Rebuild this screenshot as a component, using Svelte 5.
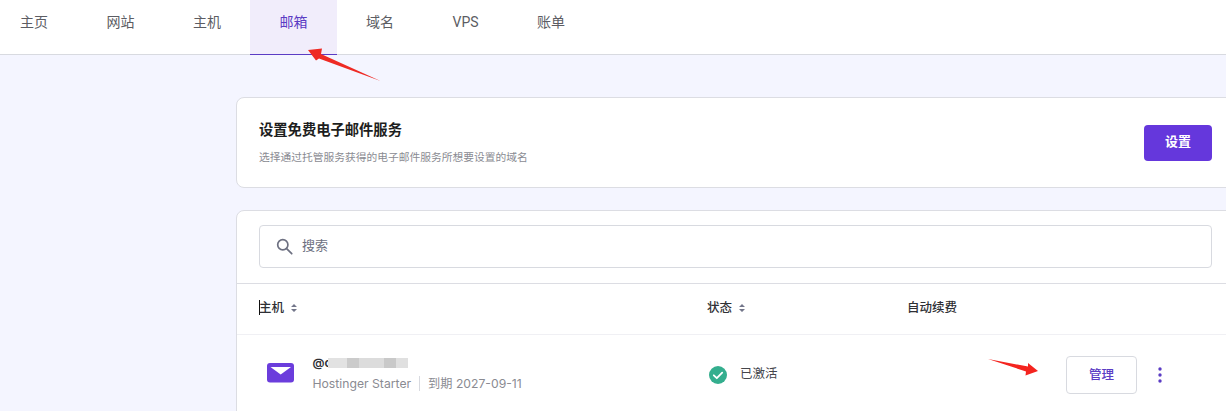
<script>
  const tabs = ['主页', '网站', '主机', '邮箱', '域名', 'VPS', '账单'];
  // pixelated redaction over the address
  const blurCells = [
    { w: 19, c: '#e2e2e2' },
    { w: 12, c: '#cbcbcb' },
    { w: 25, c: '#dcdcdc' },
    { w: 12, c: '#c9c9c9' },
    { w: 12, c: '#e0e0e0' }
  ];
</script>

<div class="page">
  <nav class="tabs">
    {#each tabs as tab}
      <a class="tab" class:active={tab === '邮箱'} href="#top">{tab}</a>
    {/each}
  </nav>

  <main class="content">
    <section class="card setup">
      <div>
        <h2>设置免费电子邮件服务</h2>
        <p>选择通过托管服务获得的电子邮件服务所想要设置的域名</p>
      </div>
      <button class="primary">设置</button>
    </section>

    <section class="card list">
      <div class="search-wrap">
        <div class="search">
          <svg width="17" height="17" viewBox="0 0 20 20" fill="none" stroke="#6d7081" stroke-width="2">
            <circle cx="8" cy="8" r="6" />
            <path d="M12.500 12.500l6 6" stroke-linecap="round" />
          </svg>
          <span>搜索</span>
        </div>
      </div>

      <div class="grid head">
        <div class="host-head">
          <i class="caret"></i>主机
          <svg class="sort" width="8" height="10" viewBox="0 0 8 10" fill="#73768a"><path d="M4 1l3 3H1zM4 9L1 6h6z" /></svg>
        </div>
        <div>状态 <svg class="sort" width="8" height="10" viewBox="0 0 8 10" fill="#73768a"><path d="M4 1l3 3H1zM4 9L1 6h6z" /></svg></div>
        <div>自动续费</div>
        <div></div>
      </div>

      <div class="grid row">
        <div class="host">
          <svg class="mail" width="27" height="20" viewBox="0 0 27 20">
            <rect width="27" height="19.500" rx="3" fill="#6b3ddc" />
            <path d="M3.500 4h20.500l-10.300 7.500z" fill="#fff" />
          </svg>
          <div class="host-text">
            <div class="domain">@c<span class="blur">{#each blurCells as cell}<b style="width: {cell.w}px; background: {cell.c}"></b>{/each}</span></div>
            <div class="meta"><span>Hostinger Starter</span><i></i><span>到期 2027-09-11</span></div>
          </div>
        </div>
        <div class="status">
          <svg width="18" height="18" viewBox="0 0 18 18">
            <circle cx="9" cy="9" r="9" fill="#34ae8e" />
            <path d="M4.800 9.300l3 2.900 5.400-5.600" fill="none" stroke="#fff" stroke-width="1.800" stroke-linecap="round" stroke-linejoin="round" />
          </svg>
          <span>已激活</span>
        </div>
        <div></div>
        <div class="actions">
          <button class="outline">管理</button>
          <svg width="4" height="16" viewBox="0 0 4 16" fill="#5b3cc4">
            <circle cx="2" cy="2" r="1.700" /><circle cx="2" cy="8" r="1.700" /><circle cx="2" cy="14" r="1.700" />
          </svg>
        </div>
      </div>
    </section>
  </main>

  <!-- red annotation arrows drawn over the screenshot -->
  <svg class="arrows" width="1226" height="411" viewBox="0 0 1226 411">
    <path d="M380.500 81L321 54 322 48.500 308 50 316 60.500 319 58.500z" fill="#ee2a24" />
    <path d="M988 359L1028 366.500 1028 363 1038 371 1025.500 375.500 1026 371.500z" fill="#f4241f" />
  </svg>
</div>

<style>
  :global(body) {
    margin: 0;
    overflow: hidden;
  }
  .page {
    position: relative;
    width: 1226px;
    height: 411px;
    overflow: hidden;
    background: #f4f5ff;
    color: #1d1e20;
    font-family: Inter, "Noto Sans CJK SC", sans-serif;
  }
  .tabs {
    display: flex;
    height: 54px;
    background: #fff;
    border-bottom: 1px solid #d8dae0;
  }
  .tab {
    flex: none;
    height: 42px;
    padding: 12px 29.250px 0;
    text-align: center;
    text-decoration: none;
    font-family: Roboto, "Noto Sans CJK SC", sans-serif;
    font-size: 14px;
    line-height: 20px;
    color: #5c5d63;
  }
  .tab:first-child {
    padding-left: 20px;
  }
  .tab.active {
    background: #f1edfb;
    color: #5b3cc4;
    border-bottom: 1px solid #5b3cc4;
  }
  .content {
    box-sizing: border-box;
    width: 1000px;
    margin-left: 236px;
    padding-top: 42px;
    display: flex;
    flex-direction: column;
    gap: 22px;
  }
  .card {
    background: #fff;
    border: 1px solid #dcdde3;
    border-radius: 8px;
  }
  .setup {
    height: 91px;
    box-sizing: border-box;
    display: flex;
    align-items: center;
    justify-content: space-between;
    padding: 0 23px 0 22px;
  }
  h2 {
    margin: 0 0 10px;
    font-size: 14.300px;
    line-height: 20px;
    font-weight: 700;
    color: #1d1e20;
  }
  .setup p {
    margin: 0;
    font-size: 10.760px;
    line-height: 16px;
    color: #8a8b92;
  }
  button {
    font-family: inherit;
    cursor: pointer;
  }
  .primary {
    width: 68px;
    height: 36px;
    padding: 0 0 4px;
    border: 0;
    border-radius: 4px;
    background: #6537dc;
    color: #fff;
    font-size: 13px;
    font-weight: 700;
  }
  .search-wrap {
    padding: 14px 23px 15px 22px;
    border-bottom: 1px solid #dcdde3;
  }
  .search {
    height: 41px;
    display: flex;
    align-items: center;
    gap: 9px;
    padding-left: 16px;
    border: 1px solid #d8dae0;
    border-radius: 4px;
    font-size: 13px;
    line-height: 16px;
    color: #6d7081;
  }
  .search span {
    margin-bottom: 3px;
  }
  .grid {
    display: grid;
    grid-template-columns: 448px 200px 159px 1fr;
    padding-left: 22px;
  }
  .head {
    box-sizing: border-box;
    height: 51px;
    padding-bottom: 6px;
    align-items: center;
    font-size: 12.500px;
    font-weight: 500;
    color: #2f3035;
    border-bottom: 1px solid #f0f0f4;
  }
  .host-head {
    position: relative;
  }
  .caret {
    position: absolute;
    left: 0;
    top: 3px;
    width: 1px;
    height: 15px;
    background: #111;
  }
  .sort {
    margin-left: 3px;
    vertical-align: -1px;
  }
  .row {
    height: 76px;
    margin-bottom: 24px;
    align-items: center;
  }
  .host {
    display: flex;
    align-items: center;
    gap: 19px;
    padding-left: 7.500px;
  }
  .mail {
    flex: none;
    margin-bottom: 1px;
  }
  .domain {
    display: flex;
    align-items: center;
    font-size: 12px;
    font-weight: 600;
    line-height: 18px;
    color: #2f3035;
  }
  .blur {
    display: flex;
    margin-left: -3px;
  }
  .blur b {
    height: 10px;
  }
  .meta {
    display: flex;
    align-items: center;
    margin-top: 3px;
    font-size: 12.200px;
    line-height: 18px;
    color: #8a8b92;
  }
  .meta i {
    width: 1px;
    height: 15px;
    margin: 0 8px;
    background: #d8dae0;
  }
  .status {
    display: flex;
    align-items: center;
    gap: 13px;
    padding-left: 2px;
    padding-bottom: 1px;
    font-size: 12.500px;
    color: #45464c;
  }
  .status svg {
    margin-top: 4px;
  }
  .actions {
    display: flex;
    align-items: center;
    gap: 21px;
    padding-top: 4px;
  }
  .outline {
    width: 71px;
    height: 38px;
    padding: 0 0 3px;
    background: #fff;
    border: 1px solid #d8dae0;
    border-radius: 4px;
    color: #5b3cc4;
    font-size: 12.500px;
    font-weight: 500;
  }
  .arrows {
    position: absolute;
    left: 0;
    top: 0;
    pointer-events: none;
  }
</style>
